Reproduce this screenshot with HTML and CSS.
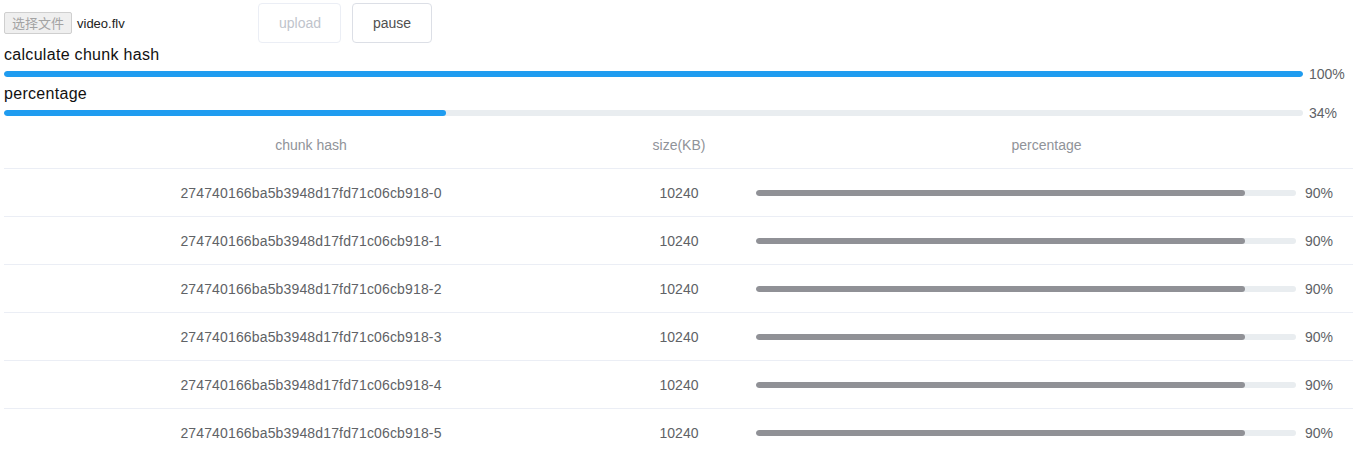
FILE: index.html
```html
<!DOCTYPE html>
<html>
<head>
<meta charset="utf-8">
<link rel="stylesheet" href="styles.css">
</head>
<body>
<div class="page">
  <div class="toolbar">
    <div class="file-input">
      <span class="file-btn">选择文件</span>
      <span class="file-name">video.flv</span>
    </div>
    <button class="btn btn-disabled">upload</button>
    <button class="btn">pause</button>
  </div>

  <div class="label">calculate chunk hash</div>
  <div class="progress">
    <div class="track"><div class="fill" style="width:100%"></div></div>
    <span class="ptext">100%</span>
  </div>

  <div class="label">percentage</div>
  <div class="progress">
    <div class="track"><div class="fill" style="width:34%"></div></div>
    <span class="ptext">34%</span>
  </div>

  <div class="table">
    <div class="row head">
      <div class="cell">chunk hash</div>
      <div class="cell">size(KB)</div>
      <div class="cell">percentage</div>
    </div>
    <div class="row">
      <div class="cell hash">274740166ba5b3948d17fd71c06cb918-0</div>
      <div class="cell">10240</div>
      <div class="cell pcell"><div class="rtrack"><div class="rfill" style="width:90.5%"></div></div><span class="rtext">90%</span></div>
    </div>
    <div class="row">
      <div class="cell hash">274740166ba5b3948d17fd71c06cb918-1</div>
      <div class="cell">10240</div>
      <div class="cell pcell"><div class="rtrack"><div class="rfill" style="width:90.5%"></div></div><span class="rtext">90%</span></div>
    </div>
    <div class="row">
      <div class="cell hash">274740166ba5b3948d17fd71c06cb918-2</div>
      <div class="cell">10240</div>
      <div class="cell pcell"><div class="rtrack"><div class="rfill" style="width:90.5%"></div></div><span class="rtext">90%</span></div>
    </div>
    <div class="row">
      <div class="cell hash">274740166ba5b3948d17fd71c06cb918-3</div>
      <div class="cell">10240</div>
      <div class="cell pcell"><div class="rtrack"><div class="rfill" style="width:90.5%"></div></div><span class="rtext">90%</span></div>
    </div>
    <div class="row">
      <div class="cell hash">274740166ba5b3948d17fd71c06cb918-4</div>
      <div class="cell">10240</div>
      <div class="cell pcell"><div class="rtrack"><div class="rfill" style="width:90.5%"></div></div><span class="rtext">90%</span></div>
    </div>
    <div class="row">
      <div class="cell hash">274740166ba5b3948d17fd71c06cb918-5</div>
      <div class="cell">10240</div>
      <div class="cell pcell"><div class="rtrack"><div class="rfill" style="width:90.5%"></div></div><span class="rtext">90%</span></div>
    </div>
  </div>
</div>
</body>
</html>
```

FILE: styles.css
```css
* { box-sizing: border-box; }
html, body { margin: 0; padding: 0; background: #fff; }
body {
  font-family: "Liberation Sans", Arial, "Noto Sans CJK SC", sans-serif;
  color: #1f1f1f;
  overflow: hidden;
}
.page { padding: 3px 4px 0 4px; }

.toolbar {
  display: flex;
  align-items: center;
  height: 40px;
}
.file-input {
  display: flex;
  align-items: center;
  width: 254px;
}
.file-btn {
  display: inline-block;
  width: 68px;
  height: 22px;
  line-height: 20px;
  text-align: center;
  font-size: 13px;
  font-family: "Noto Sans CJK SC", sans-serif;
  color: #a3a3a3;
  background: #efefef;
  border: 1px solid #cfcfcf;
  border-radius: 2px;
}
.file-name {
  margin-left: 5px;
  font-size: 13px;
  color: #222;
}
.btn {
  height: 40px;
  padding: 0 20px;
  font-family: "Liberation Sans", Arial, sans-serif;
  font-size: 14px;
  color: #505050;
  background: #fff;
  border: 1px solid #dcdfe6;
  border-radius: 4px;
  margin-right: 11px;
  width: 83px;
}
.btn + .btn { width: 80px; }
.btn-disabled {
  color: #c0c4cc;
  border-color: #ebeef5;
}

.label {
  font-size: 16px;
  line-height: 21px;
  margin-top: 1px;
  letter-spacing: 0.3px;
  color: #111;
}
.progress + .label { margin-top: 0; }

.progress {
  display: flex;
  align-items: center;
  height: 18px;
}
.track {
  flex: 1;
  height: 6px;
  background: #e9edf0;
  border-radius: 3px;
  overflow: hidden;
}
.fill {
  height: 100%;
  background: #1f9cf0;
  border-radius: 3px;
}
.ptext {
  width: 49px;
  margin-left: 6px;
  font-size: 14px;
  color: #606266;
}

.table {
  margin-right: 5px;
  font-size: 14px;
  color: #606266;
}
.row {
  display: grid;
  grid-template-columns: 614px 122px 1fr;
  height: 48px;
  border-bottom: 1px solid #ebeef5;
  align-items: center;
}
.row.head {
  height: 47px;
  color: #909399;
}
.cell {
  text-align: center;
}
.hash { letter-spacing: 0.15px; }
.pcell {
  display: flex;
  align-items: center;
  padding: 0 16px;
}
.rtrack {
  flex: 1;
  height: 6px;
  background: #e9edf0;
  border-radius: 3px;
  overflow: hidden;
}
.rfill {
  height: 100%;
  background: #909196;
  border-radius: 3px;
}
.rtext {
  width: 32px;
  margin-left: 9px;
  text-align: left;
  font-size: 14px;
  color: #606266;
}
```
